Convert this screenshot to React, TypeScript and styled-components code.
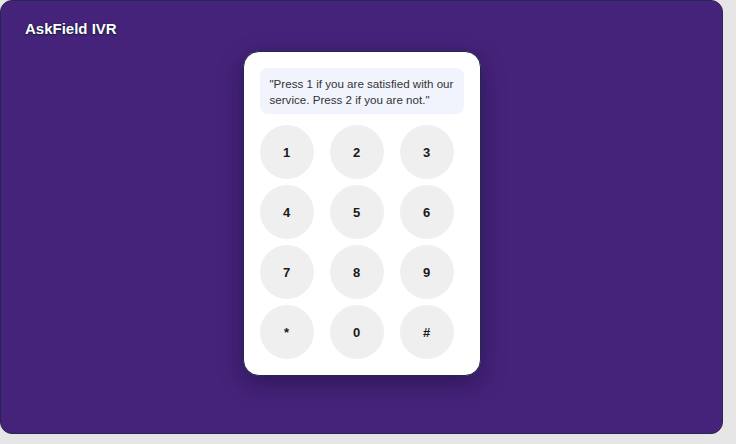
import styled, { createGlobalStyle } from "styled-components";

const keys = ["1", "2", "3", "4", "5", "6", "7", "8", "9", "*", "0", "#"];

export default function App() {
  const rows = [0, 1, 2, 3].map((r) => keys.slice(r * 3, r * 3 + 3));
  return (
    <>
      <Global />
      <Screen>
        <Title>AskField IVR</Title>
        <Phone>
          <Prompt>"Press 1 if you are satisfied with our service. Press 2 if you are not."</Prompt>
          <Pad>
            {rows.map((row, i) => (
              <Row key={i}>
                {row.map((k) => (
                  <Key key={k}>{k}</Key>
                ))}
              </Row>
            ))}
          </Pad>
        </Phone>
      </Screen>
    </>
  );
}

const Global = createGlobalStyle`
  html, body {
    margin: 0;
    padding: 0;
    background: #e6e6e6;
  }
  body {
    font-family: "Liberation Sans", Arial, sans-serif;
  }
`;

const Screen = styled.div`
  width: 723px;
  height: 434px;
  box-sizing: border-box;
  background: #45237a;
  border: 1px solid #2a2550;
  border-radius: 12px;
  padding: 20px 24px;
  display: flex;
  flex-direction: column;
  align-items: center;
`;

const Title = styled.div`
  align-self: flex-start;
  color: #fff;
  font-size: 15px;
  font-weight: 700;
  line-height: 16px;
  text-shadow: 0 1px 2px rgba(10, 30, 50, 0.9), 0 0 1px rgba(10, 30, 50, 0.9);
`;

const Phone = styled.div`
  margin-top: 14px;
  width: 238px;
  box-sizing: border-box;
  background: #fff;
  border: 1px solid #1f2b4a;
  border-radius: 16px;
  padding: 16px;
  box-shadow: 0 8px 24px rgba(20, 8, 50, 0.45);
  display: flex;
  flex-direction: column;
  gap: 11px;
`;

const Prompt = styled.div`
  background: #f1f4fd;
  border-radius: 8px;
  padding: 8px 4px 6px 10px;
  color: #333;
  font-size: 11.6px;
  line-height: 16px;
`;

const Pad = styled.div`
  display: flex;
  flex-direction: column;
  gap: 6px;
`;

const Row = styled.div`
  display: flex;
  gap: 16px;
`;

const Key = styled.div`
  width: 54px;
  height: 54px;
  border-radius: 50%;
  background: #efefef;
  display: flex;
  align-items: center;
  justify-content: center;
  color: #1a1a1a;
  font-size: 13px;
  font-weight: 700;
`;
